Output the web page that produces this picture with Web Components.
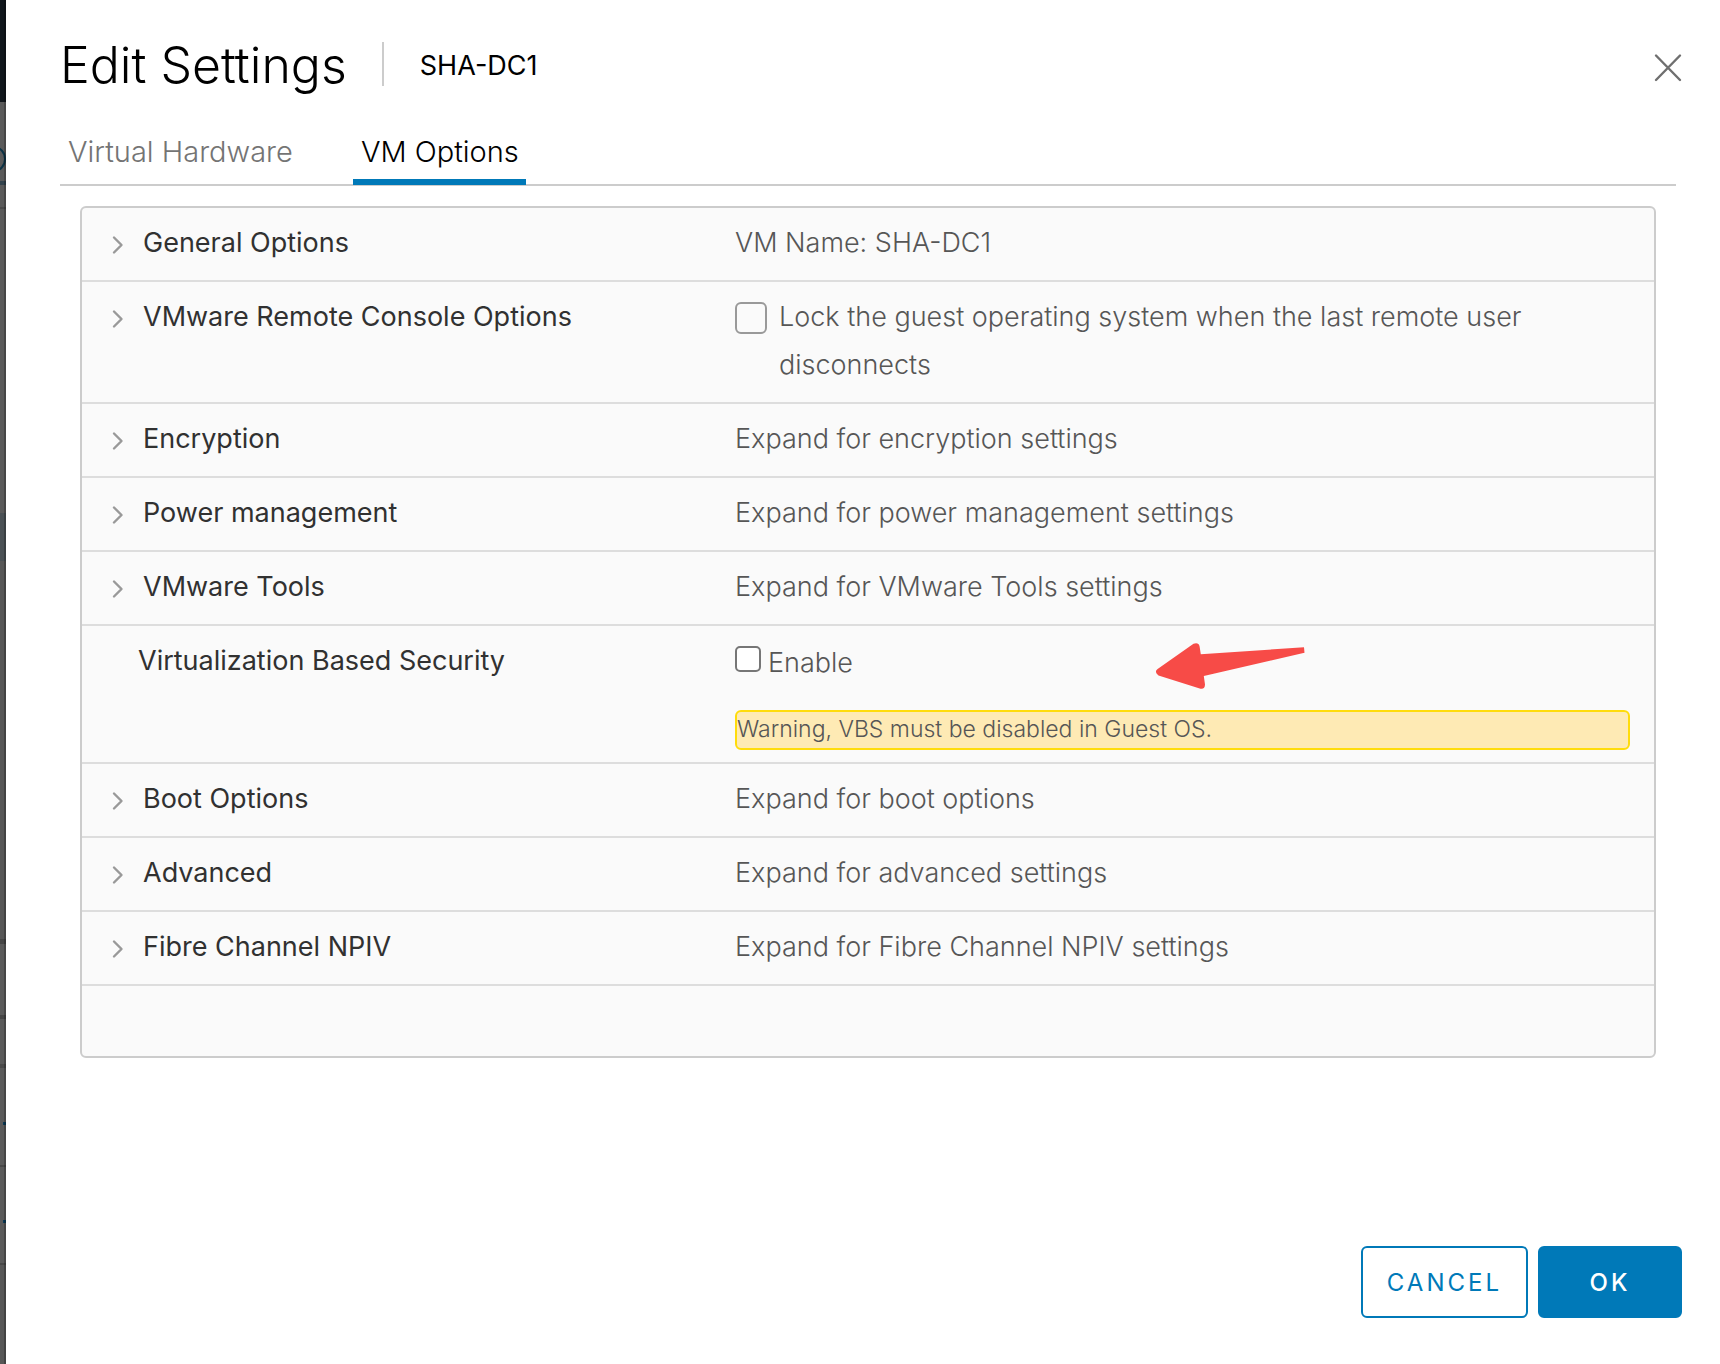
<!DOCTYPE html>
<html lang="en">
<head>
<meta charset="utf-8">
<title>Edit Settings</title>
<style>
html, body { margin: 0; }
body {
  min-height: 100vh;
  display: flex;
  background: #fff;
  color: #565656;
  font: 300 27px/48px Inter, "Noto Sans", sans-serif;
}
settings-dialog { flex: 1; }
</style>
</head>
<body>
<page-backdrop></page-backdrop>
<settings-dialog heading="Edit Settings" subject="SHA-DC1">
  <tab-strip slot="tabs" labels="Virtual Hardware,VM Options" active="1"></tab-strip>
  <option-panel>
    <option-row name="General Options">VM Name: SHA-DC1</option-row>
    <option-row name="VMware Remote Console Options"><check-field>Lock the guest operating system when the last remote user disconnects</check-field></option-row>
    <option-row name="Encryption">Expand for encryption settings</option-row>
    <option-row name="Power management">Expand for power management settings</option-row>
    <option-row name="VMware Tools">Expand for VMware Tools settings</option-row>
    <option-row name="Virtualization Based Security" fixed>
      <check-field compact>Enable</check-field>
      <warning-note>Warning, VBS must be disabled in Guest OS.</warning-note>
      <pointer-arrow></pointer-arrow>
    </option-row>
    <option-row name="Boot Options">Expand for boot options</option-row>
    <option-row name="Advanced">Expand for advanced settings</option-row>
    <option-row name="Fibre Channel NPIV">Expand for Fibre Channel NPIV settings</option-row>
  </option-panel>
  <action-button slot="actions">CANCEL</action-button>
  <action-button slot="actions" primary>OK</action-button>
</settings-dialog>
<script>
class Base extends HTMLElement {
  connectedCallback() {
    if (this.shadowRoot) return;
    this.attachShadow({ mode: 'open' }).innerHTML = this.render();
  }
}

customElements.define('page-backdrop', class extends Base {
  render() {
    const bands = [
      [102, '#11171c'], [79, '#5a5a5a'], [4, '#33434d'], [22, '#5a5a5a'], [2, '#4b4b4b'],
      [304, '#5a5a5a'], [48, '#4a5155'], [378, '#575757'], [5, '#464646'], [71, '#5a5a5a'],
      [4, '#464646'], [45, '#5a5a5a'], [4, '#4a4a4a'], [97, '#5a5a5a'], [2, '#484848'],
      [96, '#5a5a5a'], [2, '#484848']
    ];
    return `<style>
      :host { display: flex; flex-direction: column; width: 6px; background: #575757; position: relative; overflow: hidden; }
      :host::after { content: ""; position: absolute; inset: 0 0 0 auto; width: 2px; background: rgba(0,0,0,.22); }
      .ring { position: absolute; left: -18px; top: 146px; width: 20px; height: 22px; border: 2px solid #0c3346; border-radius: 50%; }
      .dot { position: absolute; right: 0; width: 3px; height: 3px; background: #0a3a57; }
    </style>
    ${bands.map(([h, c]) => `<div style="height:${h}px;background:${c}"></div>`).join('')}
    <div class="ring"></div><div class="dot" style="top:1122px"></div><div class="dot" style="top:1220px"></div>`;
  }
});

customElements.define('settings-dialog', class extends Base {
  render() {
    return `<style>
      :host { display: flex; flex-direction: column; background: #fff; }
      header { display: flex; align-items: center; padding: 33px 34px 0 54px; margin-bottom: 30px; color: #000; }
      h1 { margin: 0; padding-top: 2px; font-size: 50px; line-height: 60px; font-weight: 300; }
      .subject { margin-left: 35px; padding: 4px 0 0 36px; border-left: 2px solid #ccc; line-height: 40px; font-weight: 400; }
      .close { margin-left: auto; padding: 0; border: 0; background: none; width: 36px; height: 44px; }
      svg { display: block; }
      main { padding: 0 44px 0 54px; }
      .body { padding: 20px 20px 0; }
      footer { display: flex; justify-content: flex-end; gap: 10px; margin-top: auto; padding: 0 38px 46px; }
    </style>
    <header>
      <h1>${this.getAttribute('heading')}</h1>
      <span class="subject">${this.getAttribute('subject')}</span>
      <button class="close" aria-label="Close"><svg width="36" height="44" viewBox="0 0 36 44" fill="none" stroke="#6f6f6f" stroke-width="2.4" stroke-linecap="round"><path d="M6 13.5 30 38M30 13.5 6 38"/></svg></button>
    </header>
    <main><slot name="tabs"></slot><div class="body"><slot></slot></div></main>
    <footer><slot name="actions"></slot></footer>`;
  }
});

customElements.define('tab-strip', class extends Base {
  render() {
    const active = +this.getAttribute('active');
    return `<style>
      :host { display: flex; gap: 53px; height: 61px; box-shadow: inset 0 -2px #ccc; }
      button { height: 60px; padding: 0 7px 0 8px; border: 0; border-bottom: 6px solid transparent; background: none; font: inherit; font-size: 29px; line-height: 54px; color: #747474; }
      button[aria-selected=true] { color: #000; border-color: #0079b8; }
    </style>
    ${this.getAttribute('labels').split(',').map((t, i) => `<button role="tab" aria-selected="${i === active}">${t}</button>`).join('')}`;
  }
});

customElements.define('option-panel', class extends Base {
  render() {
    return `<style>
      :host { display: block; border: 2px solid #ccc; border-radius: 6px; background: #fafafa; padding-bottom: 70px; }
    </style><slot></slot>`;
  }
});

customElements.define('option-row', class extends Base {
  render() {
    const name = this.getAttribute('name');
    const head = this.hasAttribute('fixed')
      ? `<span class="name fixed">${name}</span>`
      : `<button class="name" aria-expanded="false"><svg width="16" height="24" viewBox="0 0 16 24" fill="none" stroke="#999" stroke-width="2.4" stroke-linecap="round" stroke-linejoin="round"><path d="M4 6.500 11.500 14 4 21.500"/></svg>${name}</button>`;
    return `<style>
      :host { display: grid; grid-template-columns: 653fr 919fr; padding: 11px 0 13px; border-bottom: 2px solid #ddd; }
      :host([fixed]) { padding-bottom: 12px; }
      .name { display: flex; align-items: center; align-self: start; gap: 17px; padding: 0 0 0 28px; border: 0; background: none; font: inherit; font-weight: 400; color: #313131; text-align: left; }
      .fixed { padding-left: 56px; }
      .value { position: relative; padding-right: 24px; }
    </style>
    ${head}<div class="value"><slot></slot></div>`;
  }
});

customElements.define('check-field', class extends Base {
  render() {
    return `<style>
      :host { display: block; }
      label { display: flex; align-items: flex-start; gap: 12px; }
      input { appearance: none; flex: none; box-sizing: border-box; width: 32px; height: 32px; margin: 9px 0 0; border: 2px solid #999; border-radius: 6px; }
      :host([compact]) label { gap: 7px; line-height: 52px; }
      :host([compact]) input { width: 26px; height: 26px; border-color: #767676; border-radius: 5px; background: #fff; }
    </style>
    <label><input type="checkbox"><span><slot></slot></span></label>`;
  }
});

customElements.define('warning-note', class extends Base {
  render() {
    return `<style>
      :host { display: block; margin-top: 21px; padding-bottom: 2px; border: 2px solid #ffdc0b; border-radius: 6px; background: #feeab4; font-size: 23px; line-height: 34px; }
    </style><slot></slot>`;
  }
});

customElements.define('pointer-arrow', class extends Base {
  render() {
    return `<style>
      :host { position: absolute; left: 415px; top: 3px; width: 160px; height: 56px; }
      svg { display: block; }
    </style>
    <svg width="160" height="56" viewBox="1150 640 160 56" fill="#f74b47" aria-hidden="true"><path d="M1157.6 669 1193.5 643.8Q1198.600 642 1199.600 646.500L1200.800 654.300 1304 647.200 1304.500 652.800 1203.800 676 1205 684.500Q1204.800 689.500 1200.500 688.700L1158.500 675.500Q1153.800 672 1157.600 669Z"/></svg>`;
  }
});

customElements.define('action-button', class extends Base {
  render() {
    return `<style>
      :host { display: block; }
      button { box-sizing: border-box; height: 72px; min-width: 144px; padding: 2px 24px 0; border: 2px solid #0079b8; border-radius: 6px; background: #fff; color: #0079b8; font: inherit; font-size: 24px; font-weight: 400; letter-spacing: 3px; }
      :host([primary]) button { background: #0079b8; color: #fff; font-weight: 500; }
    </style><button><slot></slot></button>`;
  }
});
</script>
</body>
</html>
